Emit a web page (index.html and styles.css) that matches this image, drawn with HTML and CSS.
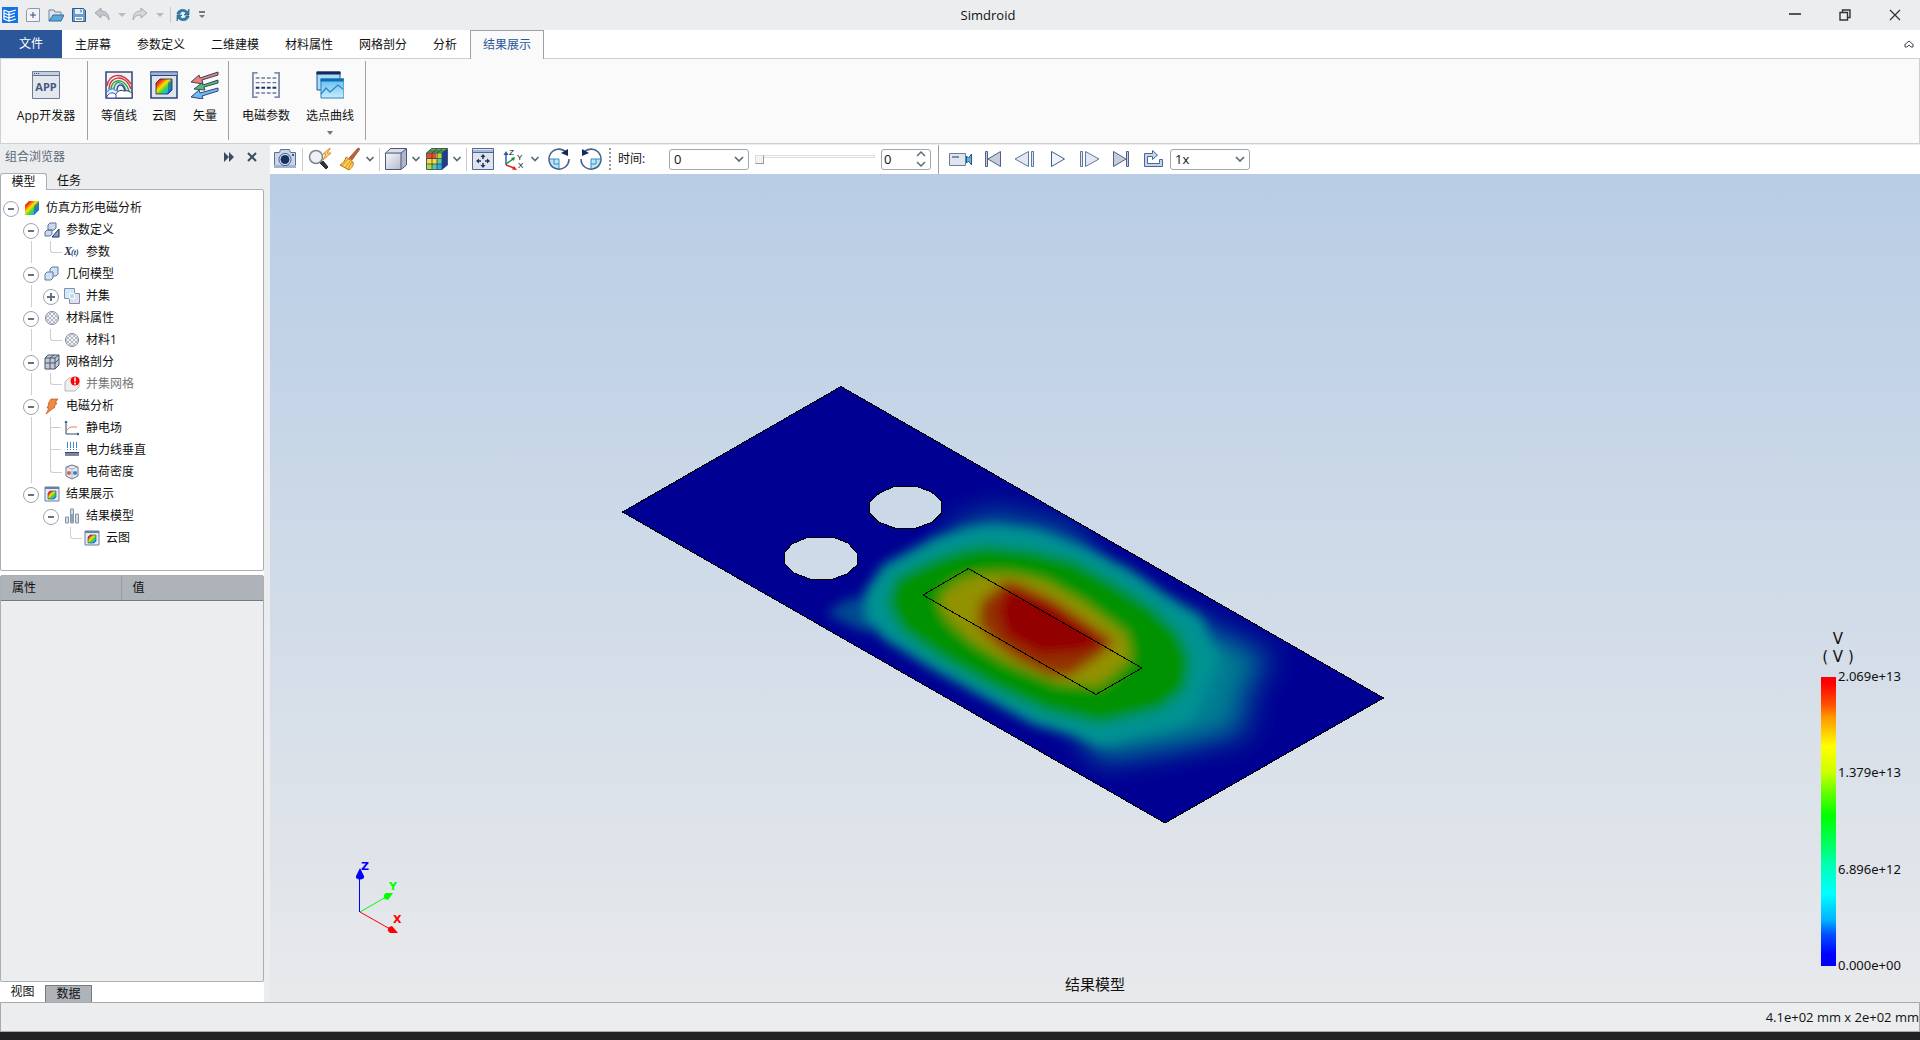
FILE: index.html
```html
<!DOCTYPE html>
<html lang="zh-CN">
<head>
<meta charset="utf-8">
<title>Simdroid</title>
<link rel="stylesheet" href="styles.css">
</head>
<body>
<svg class="defs" aria-hidden="true">
  <defs>
    <linearGradient id="rainbow" x1="0" y1="0" x2="1" y2="1"><stop offset="0" stop-color="#e81010"/><stop offset=".22" stop-color="#f23a10"/><stop offset=".42" stop-color="#ffe000"/><stop offset=".6" stop-color="#3fd83a"/><stop offset=".76" stop-color="#1fb8e8"/><stop offset="1" stop-color="#1430c0"/></linearGradient>
    <linearGradient id="steel" x1="0" y1="0" x2="1" y2="1"><stop offset="0" stop-color="#f4f6fa"/><stop offset="1" stop-color="#b4bccb"/></linearGradient>
    <linearGradient id="sky" x1="0" y1="0" x2="0" y2="1"><stop offset="0" stop-color="#5fbdf0"/><stop offset="1" stop-color="#c9ecfd"/></linearGradient>
    <symbol id="i-chev" viewBox="0 0 10 8"><path d="M1.500 2 5 5.500 8.500 2" fill="none" stroke="#566d7c" stroke-width="1.700"/></symbol>
    <symbol id="i-drop" viewBox="0 0 8 4"><path d="M0 0h8L4 4z"/></symbol>
    <symbol id="i-cloud" viewBox="0 0 16 16"><path d="M1 1h14v14H1z" fill="#e6eaf2" stroke="#6b7fa5"/><path d="M1 2h14" stroke="#6b7fa5" stroke-width="2"/><path d="M6 5h6v6l-2 2H4V7z" fill="url(#rainbow)" stroke="#1b3f7a" stroke-width=".6"/></symbol>
    <symbol id="i-ball" viewBox="0 0 16 16"><circle cx="8" cy="8" r="6.500" fill="#f3f5f8" stroke="#7f8798"/><path d="M5 3l8 8M3 5l8 8M8 2l6 6M2 8l6 6M11 3l-8 8M13 5l-8 8M8 2 2 8M14 8l-6 6" stroke="#a8afbd" stroke-width=".9"/></symbol>
  </defs>
</svg>

<div class="app">
  <header class="titlebar">
    <div class="quick">
      <svg class="q16" viewBox="0 0 16 16"><path d="M0 0h16v16H0z" fill="#1173e6"/><path d="M2 3l5 2 7-2M2 3v9l5 2 7-2M2 6l5 2 6-2M2 9l5 2 6-2M7 5v9" fill="none" stroke="#fff" stroke-width="1.300"/></svg>
      <button class="q" aria-label="新建"><svg class="q16" viewBox="0 0 16 16"><path d="M1.500 3.500l2-2h11v13h-13z" fill="#f1f3f7" stroke="#8b98b0"/><path d="M8 5v6M5 8h6" stroke="#3a4f78"/></svg></button>
      <button class="q" aria-label="打开"><svg class="q16" viewBox="0 0 16 16"><path d="M1 14V3h5l1 2h6v3" fill="#dfe5ee" stroke="#71829e"/><path d="M1 14l4-6h11l-3 6z" fill="#5aa7d8" stroke="#2e6c9e"/></svg></button>
      <button class="q" aria-label="保存"><svg class="q16" viewBox="0 0 16 16"><path d="M1.500 1.500h11l2 2v11h-13z" fill="#6a9ccc" stroke="#2d5c8c"/><path d="M4 2h8v5H4z" fill="#e9f1f8"/><path d="M4 10h8v4H4z" fill="#f5f8fb"/><path d="M10 2.500v3M5 12h6" stroke="#2d5c8c"/></svg></button>
      <button class="q" aria-label="撤销"><svg class="q16" viewBox="0 0 16 16"><path d="M1 6l6-5v3c5 0 8 3 8 9-2-4-4-5-8-5v3z" fill="#c3c7cc" stroke="#989da4" stroke-width=".8"/></svg></button>
      <svg class="drop pale"><use href="#i-drop"/></svg>
      <button class="q" aria-label="重做"><svg class="q16" viewBox="0 0 16 16"><path d="M15 6L9 1v3c-5 0-8 3-8 9 2-4 4-5 8-5v3z" fill="#d5d8dc" stroke="#989da4" stroke-width=".8"/></svg></button>
      <svg class="drop pale"><use href="#i-drop"/></svg>
      <span class="qsep"></span>
      <button class="q" aria-label="刷新"><svg class="q16" viewBox="0 0 16 16"><path d="M2 7c0-4 7-7 11-2l1-3v6H9l2-2C8 3 5 5 5 7zM14 9c0 4-7 7-11 2l-1 3V8h5l-2 2c3 3 6 1 6-1z" fill="#2b7fae" stroke="#17547c" stroke-width=".6"/></svg></button>
      <svg class="more" viewBox="0 0 8 8"><path d="M1 0h6v2H1zM1 4h6L4 7z" fill="#777"/></svg>
    </div>
    <h1 class="title">Simdroid</h1>
    <div class="winctl">
      <button aria-label="最小化"><svg viewBox="0 0 12 12"><path d="M0 5h12" stroke="#555" stroke-width="2"/></svg></button>
      <button aria-label="还原"><svg viewBox="0 0 12 12"><path d="M1 3.500h7.500V11H1zM3.500 3.500V1H11v7.500H8.500" fill="none" stroke="#333" stroke-width="1.400"/></svg></button>
      <button aria-label="关闭"><svg viewBox="0 0 12 12"><path d="M1 1l10 10M11 1L1 11" stroke="#333" stroke-width="1.200"/></svg></button>
    </div>
  </header>

  <nav class="tabs">
    <button class="tab file">文件</button><button class="tab">主屏幕</button><button class="tab">参数定义</button><button class="tab">二维建模</button><button class="tab">材料属性</button><button class="tab">网格剖分</button><button class="tab">分析</button><button class="tab on">结果展示</button>
    <button class="fold" aria-label="折叠功能区"><svg viewBox="0 0 10 8"><path d="M1 4.500L5 1l4 3.500M1 4v3h2l2-2 2 2h2V4" fill="none" stroke="#445"/></svg></button>
  </nav>

  <section class="ribbon">
    <div class="group g1">
      <button class="rb"><svg viewBox="0 0 28 28"><path d="M.500.500h27v27H.500z" fill="#e3e7ee" stroke="#6d7c98"/><path d="M1 1h26v3H1z" fill="#c7cedb"/><path d="M1 4.500h26" stroke="#5f7091"/><path d="M2 2.500h6" stroke="#40557f" stroke-dasharray="1 1"/><text x="14" y="20" class="apptext">APP</text></svg><span>App开发器</span></button>
    </div>
    <div class="group g2">
      <button class="rb"><svg viewBox="0 0 28 28"><path d="M1 1h26v26H1z" fill="#eef1f7" stroke="#3b4f7b" stroke-width="1.600"/><g fill="none" stroke-width="1.500"><path d="M2 15C4 3 17 0 26 13M4 18C4 5 20 2 26 18" stroke="#d8333b"/><path d="M6 19C6 7 20 6 24 20M9 19C9 9 18 9 21 20" stroke="#2a9f45"/><path d="M12 20c0-8 6-8 8 0" stroke="#3a46c0"/><path d="M2 21c3-4 6-5 9-1" stroke="#49a7e5"/></g><path d="M10 27c0-6 5-9 9-7 4-1 6 1 8 2v5z" fill="#fff" stroke="#26375f"/><path d="M2 25c3-4 7-4 9-1v3H2z" fill="#fff" stroke="#3a46c0"/></svg><span>等值线</span></button>
      <button class="rb"><svg viewBox="0 0 28 28"><path d="M1 1h26v26H1z" fill="#dfe3ec" stroke="#2b4680" stroke-width="1.600"/><path d="M1 3h26" stroke="#9fb4d3" stroke-width="3"/><path d="M1 4.500h26" stroke="#2b4680"/><path d="M10 8h12v11l-4 4H6V12z" fill="url(#rainbow)" stroke="#224" stroke-width=".8"/><path d="M22 8v11l-4 4V12z" fill="#1539b8" opacity=".5"/></svg><span>云图</span></button>
      <button class="rb"><svg viewBox="0 0 28 28"><g stroke="#2f4670" stroke-linejoin="round"><path d="M0 11l8-7 1 3L27 1v3L11 9l1 4z" fill="#f07f72"/><path d="M3 18l8-6 1 2 15-5v3l-14 4 1 3z" fill="#58bd6c"/><path d="M0 26l8-7 1 3 18-5v3L11 25l1 3z" fill="#6fb9f5"/></g></svg><span>矢量</span></button>
    </div>
    <div class="group g3">
      <button class="rb"><svg viewBox="0 0 30 28"><path d="M6 1H1v26h5M24 1h5v26h-5" fill="none" stroke="#8090ac" stroke-width="2"/><path d="M4 6.500h22M4 11.500h22M4 22.500h22" stroke="#6b7c9b" stroke-width="1.500" stroke-dasharray="4 2"/><path d="M4 17h22" stroke="#1d3261" stroke-width="2" stroke-dasharray="4 2"/></svg><span>电磁参数</span></button>
      <button class="rb"><svg viewBox="0 0 28 28"><path d="M1 1h23v18H1z" fill="#a9dbf5" stroke="#1f5a8f"/><path d="M.500.500h24v3H.500z" fill="#14285c"/><path d="M5 8h23v19H5z" fill="url(#sky)" stroke="#2880ba"/><path d="M4.500 7.500h23v3h-23z" fill="#0c6cb4"/><path d="M5 23l5-6 4 4 8-7 5 4" fill="none" stroke="#3287bd" stroke-width="1.300"/></svg><span>选点曲线</span><svg class="under" viewBox="0 0 8 4"><path d="M1 0h6L4 4z" fill="#777"/></svg></button>
    </div>
  </section>

  <main class="work">
    <aside class="side">
      <div class="dockhead"><h2>组合浏览器</h2>
        <button aria-label="展开"><svg viewBox="0 0 10 10"><path d="M0 0l5 5-5 5zM5 0l5 5-5 5z" fill="#3c4c60"/></svg></button>
        <button aria-label="关闭面板"><svg viewBox="0 0 10 10"><path d="M1 1l8 8M9 1L1 9" stroke="#3c4c60" stroke-width="2"/></svg></button>
      </div>
      <div class="docktabs"><button class="on">模型</button><button>任务</button></div>
      <ul class="tree">
        <li><i class="tg"></i><svg viewBox="0 0 16 16"><path d="M5 1h10v9l-5 5H1V5z" fill="url(#rainbow)"/><path d="M15 1v9l-5 5V6z" fill="#1539b8" opacity=".5"/></svg>仿真方形电磁分析</li>
        <li><i></i><i class="tg"></i><svg viewBox="0 0 16 16"><g fill="#ccd9ec" stroke="#5d7398"><path d="M4 3l2-2h6v5l-2 2H4zM1 10l2-2h5v4l-2 2H1z"/></g><path d="M8 15l7-8v8z" fill="#8fa3c5" stroke="#1a2f60"/></svg>参数定义</li>
        <li><i></i><i class="v"></i><i class="l"></i><svg viewBox="0 0 16 16"><text x="0" y="11" class="xt">X</text><text x="7" y="11" class="xs">(t)</text></svg>参数</li>
        <li><i></i><i class="tg"></i><svg viewBox="0 0 16 16"><g fill="#cfe2f5" stroke="#63799e"><path d="M6 3l2-2h6v7l-2 2H6z"/><path d="M1 8l2-2h6v6l-2 2H1z"/></g></svg>几何模型</li>
        <li><i></i><i class="v"></i><i class="tg plus"></i><svg viewBox="0 0 16 16"><path d="M.500.500h10v10H.500z" fill="#d5e8fa" stroke="#7991b4"/><path d="M5.500 5.500h10v10h-10z" fill="#dfe2ea" stroke="#8690a5"/><path d="M5.500 5.500h5v5h-5z" fill="#bcdaf4" stroke="#fff"/></svg>并集</li>
        <li><i></i><i class="tg"></i><svg><use href="#i-ball"/></svg>材料属性</li>
        <li><i></i><i class="v"></i><i class="l"></i><svg><use href="#i-ball"/></svg>材料1</li>
        <li><i></i><i class="tg"></i><svg viewBox="0 0 16 16"><path d="M1 4l3-3h11v10l-4 4H1z" fill="#c3cad8" stroke="#46546f"/><path d="M1 4h10v11M11 4l4-3M6 4v11M1 9h10l4-4M6 4l4-3" fill="none" stroke="#46546f"/></svg>网格剖分</li>
        <li class="off"><i></i><i class="v"></i><i class="l"></i><svg viewBox="0 0 16 16"><path d="M1 6l4-4h10v9l-4 4H1z" fill="#eee" stroke="#b5b5b5"/><circle cx="11" cy="5" r="4.500" fill="#f00"/><path d="M11 1.500v4M11 6.500v2" stroke="#fff" stroke-width="1.600"/></svg>并集网格</li>
        <li><i></i><i class="tg"></i><svg viewBox="0 0 16 16"><path d="M7 1h7l-3 4h2l-3 4h1L2 16l3-6H3l2-4h-1z" fill="#f08a3c" stroke="#b05a28" stroke-width=".7"/></svg>电磁分析</li>
        <li><i></i><i class="v"></i><i class="t"></i><svg viewBox="0 0 16 16"><path d="M2 1v13h13" fill="none" stroke="#2b4a7c"/><path d="M1 3l1-2 1 2M13 13l2 1-2 1" stroke="#2b4a7c" fill="none"/><path d="M2 13c2-7 5-6 11-6" fill="none" stroke="#e0825a"/></svg>静电场</li>
        <li><i></i><i class="v"></i><i class="t"></i><svg viewBox="0 0 16 16"><path d="M3.500 0v8M6.500 0v8M9.500 0v8M12.500 0v8" stroke="#3b8cc8" stroke-dasharray="6 1"/><path d="M1 10h14v4H1z" fill="#7c8798"/><path d="M1 10.500h14" stroke="#394860"/></svg>电力线垂直</li>
        <li><i></i><i class="v"></i><i class="l"></i><svg viewBox="0 0 16 16"><path d="M8 1l6 2v9l-6 3-6-3V3z" fill="#e7eaf0" stroke="#68758c"/><path d="M2 3l6 2 6-2M8 5v10" fill="none" stroke="#a8b1c0"/><circle cx="5" cy="9" r="2" fill="#d8663e"/><circle cx="11" cy="9" r="2" fill="#2b84cf"/></svg>电荷密度</li>
        <li><i></i><i class="tg"></i><svg><use href="#i-cloud"/></svg>结果展示</li>
        <li><i></i><i></i><i class="tg"></i><svg viewBox="0 0 16 16"><path d="M1.500 9h3v6h-3zM6.500 1h3v14h-3zM11.500 6h3v9h-3z" fill="#d0dbe4" stroke="#8496a6"/><path d="M7 6h2v8H7z" fill="#8ca7b8"/></svg>结果模型</li>
        <li><i></i><i></i><i></i><i class="l"></i><svg><use href="#i-cloud"/></svg>云图</li>
      </ul>
      <div class="props"><table><thead><tr><th>属性</th><th>值</th></tr></thead></table></div>
      <div class="foottabs"><button>视图</button><button class="dim">数据</button></div>
    </aside>

    <section class="stage">
      <div class="tools">
        <button class="ic" aria-label="截图"><svg viewBox="0 0 24 24"><path d="M1.500 5.500h5l1-3h9l1 3h5v15h-21z" fill="#c7d6ee" stroke="#587099"/><path d="M1 18h22v3H1z" fill="#a3b4d2"/><circle cx="12" cy="12.500" r="6" fill="#eef3fa" stroke="#3e5682"/><circle cx="12" cy="12.500" r="4.500" fill="#15315f"/><circle cx="20" cy="8" r="1" fill="#15315f"/></svg></button>
        <span class="sep"></span>
        <button class="ic" aria-label="快速缩放"><svg viewBox="0 0 24 24"><path d="M12 16l3-2 5 6-2 2z" fill="#333" stroke="#222"/><circle cx="8" cy="10" r="6.500" fill="#edf0f4" stroke="#7c8490" stroke-width="1.500"/><path d="M22 1l-7 6h3l-3 6 8-7h-4l3-4z" fill="#ffd88a" stroke="#e08a28"/></svg></button>
        <button class="ic s" aria-label="清除"><svg viewBox="0 0 24 24"><path d="M20 1l2 1-8 11-3-2z" fill="#b96436" stroke="#8b4a2a" stroke-width=".7"/><path d="M8 10l7 5c1 3-1 6-4 8l-9-5c3-2 5-4 6-8z" fill="#ffcf52" stroke="#b8741d"/><path d="M10 12l-6 7M12 14l-5 7M14 15l-4 7" stroke="#d38d23"/></svg></button>
        <svg class="chev"><use href="#i-chev"/></svg>
        <span class="sep"></span>
        <button class="ic" aria-label="显示模式"><svg viewBox="0 0 24 24"><path d="M1.500 6l5-4.500h16V18L17 22.500H1.500z" fill="#aeb6c7" stroke="#4a587c"/><path d="M2 6.500h15V22H2z" fill="url(#steel)"/><path d="M2 6l5-4h15l-5 4z" fill="#d9dee8"/><path d="M1.500 6H17v16M17 6l5-4" fill="none" stroke="#4a587c"/></svg></button>
        <svg class="chev"><use href="#i-chev"/></svg>
        <button class="ic" aria-label="云图模式"><svg viewBox="0 0 24 24"><path d="M1.500 6l5-4.500h16V18L17 22.500H1.500z" fill="#1d3aa0"/><path d="M1.500 6l5-4.500h16L17 6z" fill="#5cb73d"/><path d="M1.500 6H17v16.500H1.500z" fill="#ffd83a"/><path d="M2 6h9v6H2z" fill="#ee4a24"/><path d="M12 6h5v5h-5zM2 17h5v5H2z" fill="#a6dc3c"/><path d="M7 17h5v5H7zM12 12h5v5h-5z" fill="#4fcf9a"/><path d="M12 17h5v5h-5z" fill="#2fa5e6"/><path d="M1.500 6l5-4.500h16V18L17 22.500H1.500zM1.500 6H17v16M17 6l5-4M7 6v16M12 6v16M1.500 11.500H17l5-5M1.500 17H17l5-5M7 6l5-4M12 6l5-4M4 4h15v15" fill="none" stroke="#31455c" stroke-width=".8"/></svg></button>
        <svg class="chev"><use href="#i-chev"/></svg>
        <span class="sep"></span>
        <button class="ic" aria-label="适应窗口"><svg viewBox="0 0 24 24"><path d="M1.500 1.500h21v21h-21z" fill="#dfe4ec" stroke="#4f6897"/><path d="M2 3h20v3H2z" fill="#a5b8d6"/><path d="M1.500 5.500h21" stroke="#4f6897"/><path d="M12 7l2.500 3h-5zM12 21l2.500-3h-5zM5 14l3-2.500v5zM19 14l-3-2.500v5z" fill="#1e345f"/><path d="M12 10v2M12 16v2M8 14h2M14 14h2" stroke="#1e345f" stroke-width="1.500"/></svg></button>
        <button class="ic m" aria-label="视角"><svg viewBox="0 0 24 24"><path d="M3 18V6" stroke="#2456a8" stroke-width="1.400"/><path d="M3 4l2.500 4h-5z" fill="#2456a8"/><path d="M3 17l7-5" stroke="#149045" stroke-width="1.400"/><path d="M12 10l-1 4-3-3z" fill="#149045"/><path d="M3 18l8 3" stroke="#e02020" stroke-width="1.400"/><path d="M14 23l-5-.500 2-3.500z" fill="#e02020"/><g class="axt"><text x="6" y="8">Z</text><text x="14" y="13">Y</text><text x="15" y="21">X</text></g></svg></button>
        <svg class="chev"><use href="#i-chev"/></svg>
        <button class="ic s" aria-label="顺时针旋转"><svg viewBox="0 0 24 24"><path d="M2 12a10 10 0 0 0 10 10V12z" fill="#b9e5f8"/><path d="M12 12v10M2 12h10M7 12v5h5" fill="none" stroke="#3a8dbb"/><path d="M19 5A10 10 0 1 0 22 12M22 12a10 10 0 0 1-1 4" fill="none" stroke="#455f88" stroke-width="1.500"/><path d="M21 2v7l-7-3z" fill="#122a5c"/></svg></button>
        <button class="ic m" aria-label="逆时针旋转"><svg viewBox="0 0 24 24"><path d="M22 12a10 10 0 0 1-10 10V12z" fill="#b9e5f8"/><path d="M12 12v10M22 12H12M17 12v5h-5" fill="none" stroke="#3a8dbb"/><path d="M5 5A10 10 0 1 1 2 12M2 12a10 10 0 0 0 1 4" fill="none" stroke="#455f88" stroke-width="1.500"/><path d="M3 2v7l7-3z" fill="#122a5c"/></svg></button>
        <span class="dots"></span>
        <label for="time" class="tlabel">时间:</label>
        <select id="time" class="combo"><option>0</option></select>
        <input type="range" class="slider" aria-label="时间进度" min="0" max="100" value="0">
        <input type="number" class="spin" aria-label="步数" value="0">
        <span class="sep dark"></span>
        <button class="ic m" aria-label="录制"><svg viewBox="0 0 24 24"><path d="M.500 6.500h16v12H.500z" fill="#dfe5ef" stroke="#6a7e9e"/><path d="M3 10h7" stroke="#8090a8" stroke-width="2"/><path d="M17.500 9l2 2 3-4v11l-3-4-2 2z" fill="#65b3dd" stroke="#285a86"/></svg></button>
        <button class="ic m" aria-label="第一帧"><svg viewBox="0 0 24 24"><path d="M4.500 4.500h2v15h-2zM19.500 4.500v15L7 12z" fill="#c5cddc" stroke="#4d6286"/></svg></button>
        <button class="ic m" aria-label="上一帧"><svg viewBox="0 0 24 24"><path d="M2 12L15.500 4.500v15zM18.500 4.500h2v15h-2z" fill="#e3e8f0" stroke="#60779d"/></svg></button>
        <button class="ic m" aria-label="播放"><svg viewBox="0 0 24 24"><path d="M6.500 4.500v15L19.500 12z" fill="#f0f4fa" stroke="#3f5c92"/></svg></button>
        <button class="ic m" aria-label="下一帧"><svg viewBox="0 0 24 24"><path d="M22 12L8.500 4.500v15zM3.500 4.500h2v15h-2z" fill="#e3e8f0" stroke="#60779d"/></svg></button>
        <button class="ic m" aria-label="最后一帧"><svg viewBox="0 0 24 24"><path d="M17.500 4.500h2v15h-2zM4.500 4.500v15L17 12z" fill="#c5cddc" stroke="#4d6286"/></svg></button>
        <button class="ic m" aria-label="循环"><svg viewBox="0 0 24 24"><path d="M3.500 19.500v-13h8v-3l5 4.500-5 4.500v-3h-5v7h12v-4h3v7z" fill="#c3d5ec" stroke="#4b6896"/></svg></button>
        <select class="combo speed" aria-label="播放速度"><option>1x</option></select>
      </div>

      <div class="canvas">
        <svg class="model" viewBox="270 174 1650 828" preserveAspectRatio="xMidYMid meet">
          <defs>
            <clipPath id="plateclip"><path d="M841 386.500L1383.500 698 1165 823 622.500 512z"/></clipPath>
            <mask id="holes"><path d="M270 174h1650v828H270z" fill="#fff"/><path d="M869.500 502l10-9 16-7h20l16 6 10 9v12l-9 9-16 6h-22l-16-6-9-9z"/><path d="M784 553l8-9 16-7h25l15 6 10 11-1 11-10 9-14 5h-23l-16-6-9-9z"/></mask>
            <filter id="b1" x="-20%" y="-20%" width="140%" height="140%"><feGaussianBlur stdDeviation="6"/></filter>
            <filter id="b2" x="-40%" y="-40%" width="180%" height="180%"><feGaussianBlur stdDeviation="14"/></filter>
          </defs>
          <g mask="url(#holes)"><g clip-path="url(#plateclip)">
            <path d="M600 370h800v470H600z" fill="#000092"/>
            <g filter="url(#b2)">
              <path d="M1180 610L1278 656 1256 690 1250 736 1170 752 1100 764 1060 700z" fill="#004092"/>
              <path d="M1180 620L1254 656 1236 690 1228 730 1170 746 1100 756 1060 700z" fill="#008092"/>
              <path d="M940 530L992 508 1060 522 1100 548 1000 580z" fill="#005092"/>
            </g>
            <g filter="url(#b1)">
              <path d="M826 613l24-16 22 4v32l-16-4z" fill="#004892"/>
              <path d="M993 524L1036 529 1085 546 1130 569 1172 598 1202 618 1210 642 1220 656 1206 690 1192 720 1172 728 1140 735 1100 746 1072 735 1034 725 988 700 932 669 882 638 866 617 864 593 883 565 935 537 968 527z" fill="#009292"/>
              <path d="M988 547L1034 552 1074 562 1112 583 1151 608 1178 634 1189 660 1184 688 1160 708 1100 722 1047 710 1000 689 945 659 903 630 889 604 896 579 930 562 962 551z" fill="#009200" stroke="#009200" stroke-width="3"/>
              <path d="M1013 574L1044 581 1084 603 1126 634 1131 658 1117 672 1098 686 1058 683 1006 662 971 641 948 620 939 604 943 593 958 581 980 574z" fill="#929200"/>
              <path d="M1006 580L1020 584 1052 599 1088 623 1115 642 1098 657 1070 676 1050 676 1020 662 996 645 978 625 980 602z" fill="#923000"/>
              <path d="M1008 586L1050 600 1110 641 1082 652 1040 655 1006 636 998 610z" fill="#920000"/>
            </g>
          </g></g>
          <g fill="none" stroke="#000" shape-rendering="crispEdges">
            <path d="M841 386.500L1383.500 698 1165 823 622.500 512z"/>
            <path d="M968.500 568.500L1142 668 1096 694.500 923 595z"/>
            <path d="M869.500 502l10-9 16-7h20l16 6 10 9v12l-9 9-16 6h-22l-16-6-9-9z"/><path d="M784 553l8-9 16-7h25l15 6 10 11-1 11-10 9-14 5h-23l-16-6-9-9z"/>
          </g>
          <g class="triad">
            <path d="M359.500 912V878" stroke="#00f"/><path d="M360 868l4 8v2q-4 3-8 0v-2z" fill="#00f"/><text x="361" y="870" fill="#00f">Z</text>
            <path d="M360 912l26-15" stroke="#0f0"/><path d="M393 893l-7 0q-4 2-1 6l3 1z" fill="#0f0"/><text x="389" y="890" fill="#0f0">Y</text>
            <path d="M360 912l30 17" stroke="#f00"/><path d="M398 933l-8 0q-4-3-1-6l3-1z" fill="#f00"/><text x="393" y="923" fill="#f00">X</text>
          </g>
        </svg>
        <div class="caption">结果模型</div>
        <div class="legend">
          <div class="unit"><span>V</span><span>( V )</span></div>
          <div class="scale"><div class="ramp"></div><ol><li>2.069e+13</li><li>1.379e+13</li><li>6.896e+12</li><li>0.000e+00</li></ol></div>
        </div>
      </div>
    </section>
  </main>
  <footer class="status">4.1e+02 mm x 2e+02 mm</footer>
  <div class="edge"></div>
</div>
</body>
</html>
```
FILE: styles.css
```css
* { box-sizing: border-box; }
body { margin: 0; font: 12px/16px "Open Sans", "Noto Sans CJK SC", sans-serif; color: #111; }
button, select, input { font: inherit; color: inherit; }
button { border: 0; padding: 0; background: none; }
h1, h2, ul, ol { margin: 0; padding: 0; list-style: none; font-weight: normal; }
.defs { position: absolute; width: 0; height: 0; }
.app { display: flex; flex-direction: column; height: 100vh; background: #ebedef; overflow: hidden; }

.titlebar { flex: none; height: 30px; display: flex; align-items: center; }
.quick { width: 206px; display: flex; align-items: center; gap: 7px; padding-left: 2px; }
.quick > * { flex: none; }
.q16 { width: 16px; height: 16px; display: block; }
.quick .q { width: 16px; }
.drop { width: 8px; height: 4px; }
.pale { fill: #b8bbbf; }
.quick .drop { margin: 0 -1px 0 1px; }
.qsep { width: 1px; height: 16px; background: #c8cacc; margin-right: -3px; }
.more { width: 8px; height: 8px; }
.title { flex: 1; text-align: center; font-size: 13px; }
.winctl { display: flex; }
.winctl button { width: 50px; height: 30px; display: grid; place-items: center; }
.winctl svg { width: 12px; height: 12px; }

.tabs { flex: none; height: 29px; display: flex; background: #fff; border-bottom: 1px solid #cfcfcf; }
.tab { height: 29px; padding: 0 13px; }
.file { width: 62px; height: 28px; padding: 0; background: #2b579a; color: #fff; }
.tab.on { background: #fafafa; color: #2b579a; border: 1px solid #a0a0a0; border-bottom: 0; padding: 0 12px; }
.fold { margin-left: auto; width: 22px; display: grid; place-items: center; }
.fold svg { width: 10px; height: 8px; }

.ribbon { flex: none; height: 85px; display: flex; background: #fafafa; border: 1px solid #cfcfcf; border-top: 0; padding: 2px 0 3px; }
.group { display: flex; justify-content: center; padding-top: 10px; border-right: 1px solid #a0a0a0; }
.g1 { width: 87px; padding-left: 4px; }
.g2 { width: 141px; gap: 13px; padding-left: 4px; }
.g3 { width: 137px; gap: 16px; padding-left: 2px; }
.rb { display: flex; flex-direction: column; align-items: center; gap: 9px; white-space: nowrap; }
.rb > svg { height: 28px; width: 28px; }
.rb .under { width: 8px; height: 4px; margin-top: -2px; }
.apptext { font: bold 11px "Open Sans", sans-serif; fill: #46597f; text-anchor: middle; }

.work { flex: 1; min-height: 0; display: flex; padding-top: 1px; }
.side { width: 270px; flex: none; display: flex; flex-direction: column; padding-right: 6px; }
.dockhead { height: 28px; display: flex; align-items: center; padding: 0 1px 4px 5px; }
.dockhead h2 { flex: 1; font-size: 12px; color: #5c6878; }
.dockhead button { width: 23px; height: 20px; display: grid; place-items: center; }
.dockhead svg { width: 10px; height: 10px; }
.docktabs { height: 16px; display: flex; }
.docktabs button { width: 44px; line-height: 16px; }
.docktabs .on { width: 47px; height: 17px; background: #fff; border: 1px solid #a9afb4; border-bottom: 0; border-radius: 3px 3px 0 0; z-index: 1; }
.tree { flex: 380 1 0; min-height: 0; background: #fff; border: 1px solid #a9afb4; border-radius: 0 2px 2px 2px; padding-top: 7px; overflow: hidden; }
.tree li { height: 22px; display: flex; align-items: center; white-space: nowrap; }
.tree li > svg { width: 16px; height: 16px; margin: 0 6px 0 3px; }
.tree i { width: 20px; height: 22px; flex: none; background: no-repeat center; }
.tree .off { color: #777; }
.tree .tg::before { content: ""; display: block; width: 14px; height: 14px; margin: 4px 2px; border: 1px solid #9fa4aa; border-radius: 50%; background: linear-gradient(#657080, #657080) center / 6px 2px no-repeat; }
.tree .plus::before { background: linear-gradient(#657080, #657080) center / 8px 2px no-repeat, linear-gradient(#657080, #657080) center / 2px 8px no-repeat; }
.tree .v { background-image: linear-gradient(#cfcfcf, #cfcfcf); background-size: 1px 22px; }
.tree .l::before { content: ""; display: block; width: 11px; height: 11px; margin-left: 9px; border: solid #cfcfcf; border-width: 0 0 1px 1px; border-radius: 0 0 0 3px; }
.tree .t { background: linear-gradient(#cfcfcf, #cfcfcf) 9px 0 / 1px 22px no-repeat, linear-gradient(#cfcfcf, #cfcfcf) 9px 10px / 11px 1px no-repeat; }
.xt { font: italic bold 12px "Liberation Serif", serif; fill: #24365c; }
.xs { font: italic bold 8px "Liberation Serif", serif; fill: #24365c; }
.props { flex: 413 1 0; min-height: 0; border: 1px solid #a9afb4; border-radius: 2px; box-shadow: 0 -4px #fff; margin-top: 4px; }
.props table { width: 100%; border-collapse: collapse; table-layout: fixed; }
.props th { height: 25px; padding: 0 11px; background: #adb3b8; text-align: left; font-weight: normal; border-bottom: 1px solid #747a7e; }
.props th:first-child { width: 120px; border-right: 1px solid #979da1; }
.foottabs { flex: none; height: 20px; display: flex; background: #fff; }
.foottabs button { width: 45px; height: 19px; }
.foottabs .dim { width: 47px; height: 17px; align-self: flex-end; background: #adb3b8; border: 1px solid #747a7e; border-bottom: 0; }

.stage { flex: 1; min-width: 0; display: flex; flex-direction: column; }
.tools { flex: none; height: 29px; display: flex; align-items: center; background: #fff; padding: 0 0 1px 3px; }
.ic { width: 24px; height: 24px; flex: none; }
.ic svg { width: 24px; height: 24px; display: block; }
.s { margin-left: 6px; }
.m { margin-left: 8px; }
.chev { width: 10px; height: 8px; flex: none; margin: 0 4px 0 3px; }
.sep { width: 1px; height: 23px; margin: 0 5px; background: #ccc; }
.chev + .sep { margin: 0 4px 0 0; }
.chev + .s { margin-left: 3px; }
.sep.dark { height: 29px; margin: 0 2px 0 7px; background: #a0a0a0; }
.dots { width: 2px; height: 22px; margin: 0 7px 0 6px; background: repeating-linear-gradient(#999 0 2px, transparent 2px 4px); }
.tlabel { width: 51px; }
.combo, .spin { height: 21px; border: 1px solid #a2a6aa; border-radius: 3px; background: #fff no-repeat right 4px center; font-size: 13px; line-height: 16px; padding: 0 0 0 4px; appearance: none; }
.combo { width: 80px; background-image: url("data:image/svg+xml,%3Csvg xmlns='http://www.w3.org/2000/svg' width='10' height='8'%3E%3Cpath d='M1 2l4 4 4-4' fill='none' stroke='%23566d7c' stroke-width='1.700'/%3E%3C/svg%3E"); }
.speed { margin-left: 5px; }
.spin { width: 50px; padding-left: 2px; appearance: textfield; background-image: url("data:image/svg+xml,%3Csvg xmlns='http://www.w3.org/2000/svg' width='10' height='18'%3E%3Cpath d='M1 6l4-4 4 4M1 12l4 4 4-4' fill='none' stroke='%23566d7c' stroke-width='1.500'/%3E%3C/svg%3E"); }
.spin::-webkit-inner-spin-button { appearance: none; }
.slider { appearance: none; width: 120px; height: 12px; margin: 0 6px; background: linear-gradient(#fff, #fff) 1px 3px / 118px 1px no-repeat, linear-gradient(#ddd, #ddd) 0 2px / 120px 3px no-repeat; }
.slider::-webkit-slider-thumb { appearance: none; width: 9px; height: 9px; background: #f3f3f3; border: 1px solid; border-color: #ddd #999 #999 #ddd; }
.axt { font: 8px/8px "Liberation Sans", sans-serif; }

.canvas { flex: 1; min-height: 0; position: relative; background: linear-gradient(#b8cde5, #e8e9eb); }
.model { display: block; width: 100%; height: 100%; }
.triad text { font: bold 11px "DejaVu Sans", sans-serif; }
.caption { position: absolute; left: 0; right: 0; bottom: 8px; text-align: center; font-size: 15px; line-height: 20px; }
.legend { position: absolute; right: 15px; bottom: 29px; width: 84px; }
.unit { width: 34px; display: flex; flex-direction: column; align-items: center; font: 15px/18px "DejaVu Sans", sans-serif; white-space: nowrap; }
.scale { display: flex; gap: 2px; margin-top: 2px; }
.ramp { width: 15px; height: 289px; margin-top: 9px; background: linear-gradient(#f00 0 2%, #f50 10%, #f90 14%, #ff0 24%, #cf0 33%, #6f0 40%, #0f0 48%, #00ff60 58%, #00ffb4 65%, #0ff 75%, #00b4ff 84%, #0050ff 89%, #00f 96%); }
.scale ol { height: 305px; display: flex; flex-direction: column; justify-content: space-between; font: 13px/16px "Noto Sans", sans-serif; }

.status { flex: none; height: 30px; border: 1px solid #a9a9a9; text-align: right; font-size: 13px; line-height: 28px; }
.edge { flex: none; height: 8px; background: #222124; }
```
